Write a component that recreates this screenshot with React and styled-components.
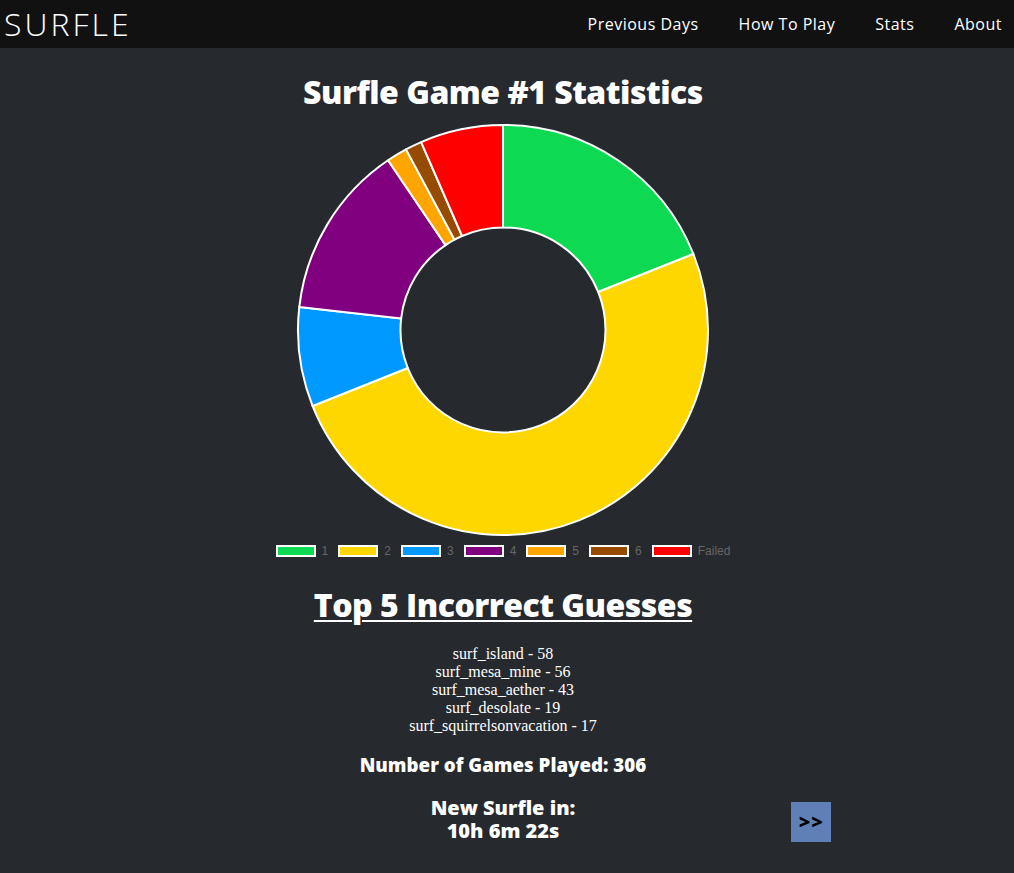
import React from 'react';
import styled, { createGlobalStyle } from 'styled-components';

const GlobalStyle = createGlobalStyle`
  html, body {
    margin: 0;
    padding: 0;
    background: #26292e;
  }
  body {
    font-family: 'Open Sans', 'Liberation Sans', sans-serif;
    color: #fff;
    min-height: 873px;
  }
`;

const results = [
  { label: '1', value: 58, color: '#0ed952' },
  { label: '2', value: 153, color: '#fed700' },
  { label: '3', value: 24, color: '#0099ff' },
  { label: '4', value: 42, color: '#800080' },
  { label: '5', value: 5, color: '#ffa500' },
  { label: '6', value: 4, color: '#964b00' },
  { label: 'Failed', value: 20, color: '#ff0000' },
];

const guesses = [
  ['surf_island', 58],
  ['surf_mesa_mine', 56],
  ['surf_mesa_aether', 43],
  ['surf_desolate', 19],
  ['surf_squirrelsonvacation', 17],
];

function point(cx, cy, r, angle) {
  const rad = (angle - 90) * (Math.PI / 180);
  return [cx + r * Math.cos(rad), cy + r * Math.sin(rad)];
}

function arcPath(cx, cy, outer, inner, start, end) {
  const large = end - start > 180 ? 1 : 0;
  const [x1, y1] = point(cx, cy, outer, start);
  const [x2, y2] = point(cx, cy, outer, end);
  const [x3, y3] = point(cx, cy, inner, end);
  const [x4, y4] = point(cx, cy, inner, start);
  return `M${x1} ${y1} A${outer} ${outer} 0 ${large} 1 ${x2} ${y2} L${x3} ${y3} A${inner} ${inner} 0 ${large} 0 ${x4} ${y4} Z`;
}

function Doughnut({ data }) {
  const total = data.reduce((sum, d) => sum + d.value, 0);
  let angle = 0;
  return (
    <ChartSvg viewBox="0 0 420 420" width="420" height="420">
      {data.map(d => {
        const start = angle;
        angle += (d.value / total) * 360;
        return (
          <path
            key={d.label}
            d={arcPath(210, 210, 205, 102.5, start, angle)}
            fill={d.color}
            stroke="#fff"
            strokeWidth="2"
            strokeLinejoin="round"
          />
        );
      })}
    </ChartSvg>
  );
}

function App() {
  return (
    <>
      <GlobalStyle />
      <Nav>
        <Logo>SURFLE</Logo>
        <Links>
          <a href="#previous">Previous Days</a>
          <a href="#howto">How To Play</a>
          <a href="#stats">Stats</a>
          <a href="#about">About</a>
        </Links>
      </Nav>
      <Main>
        <Title>Surfle Game #1 Statistics</Title>
        <Doughnut data={results} />
        <Legend>
          {results.map(d => (
            <LegendItem key={d.label}>
              <Swatch color={d.color} />
              {d.label}
            </LegendItem>
          ))}
        </Legend>
        <Title underline>Top 5 Incorrect Guesses</Title>
        <GuessList>
          {guesses.map(([name, count]) => (
            <li key={name}>
              {name} - {count}
            </li>
          ))}
        </GuessList>
        <Played>Number of Games Played: 306</Played>
        <TimerRow>
          <span />
          <Timer>
            <span>New Surfle in:</span>
            <span>10h 6m 22s</span>
          </Timer>
          <NextButton type="button">&gt;&gt;</NextButton>
        </TimerRow>
      </Main>
    </>
  );
}

export default App;

const Nav = styled.nav`
  display: flex;
  align-items: center;
  justify-content: space-between;
  height: 48px;
  background: #111111;
  padding: 0 12px 0 4px;
`;

const Logo = styled.div`
  font-size: 32px;
  font-weight: 300;
  line-height: 48px;
  letter-spacing: 3px;
`;

const Links = styled.div`
  display: flex;
  gap: 40px;
  & a {
    color: #fff;
    text-decoration: none;
    font-size: 16px;
    font-weight: 400;
    letter-spacing: 0.5px;
  }
`;

const Main = styled.main`
  display: flex;
  flex-direction: column;
  align-items: center;
  padding-right: 8px;
`;

const Title = styled.h1`
  margin: ${p => (p.underline ? '28px 0 0' : '24px 0 0')};
  font-size: 32px;
  font-weight: 800;
  line-height: 40px;
  letter-spacing: -0.5px;
  text-decoration: ${p => (p.underline ? 'underline' : 'none')};
  text-decoration-thickness: 2px;
  text-underline-offset: 3px;
`;

const ChartSvg = styled.svg`
  display: block;
  margin-top: 8px;
`;

const Legend = styled.div`
  display: flex;
  gap: 10px;
  margin-top: 5px;
  height: 12px;
  font-family: 'Liberation Sans', Arial, sans-serif;
  font-size: 12px;
  line-height: 12px;
  color: #666;
`;

const LegendItem = styled.div`
  display: flex;
  align-items: center;
  gap: 6px;
`;

const Swatch = styled.span`
  box-sizing: border-box;
  width: 40px;
  height: 12px;
  border: 2px solid #fff;
  background: ${p => p.color};
`;

const GuessList = styled.ul`
  list-style: none;
  margin: 20px 0 0;
  padding: 0;
  text-align: center;
  font-family: 'Liberation Serif', 'Times New Roman', serif;
  font-size: 16px;
  line-height: 18px;
`;

const Played = styled.h3`
  margin: 18px 0 0;
  font-size: 18.72px;
  font-weight: 800;
  line-height: 24px;
`;

const TimerRow = styled.div`
  display: grid;
  grid-template-columns: 1fr auto 1fr;
  align-items: start;
  width: 100%;
  margin-top: 19px;
`;

const Timer = styled.h2`
  display: flex;
  flex-direction: column;
  align-items: center;
  margin: 0;
  font-size: 20px;
  font-weight: 800;
  line-height: 23px;
  & span {
    display: block;
    height: 23px;
    overflow: visible;
  }
`;

const NextButton = styled.button`
  justify-self: start;
  width: 40px;
  height: 40px;
  margin: 6px 0 0 216px;
  padding: 0 0 2px;
  border: none;
  background: #5f80b7;
  color: #000;
  font-family: 'Open Sans', sans-serif;
  font-size: 20px;
  font-weight: 800;
  letter-spacing: 1px;
  cursor: pointer;
`;
